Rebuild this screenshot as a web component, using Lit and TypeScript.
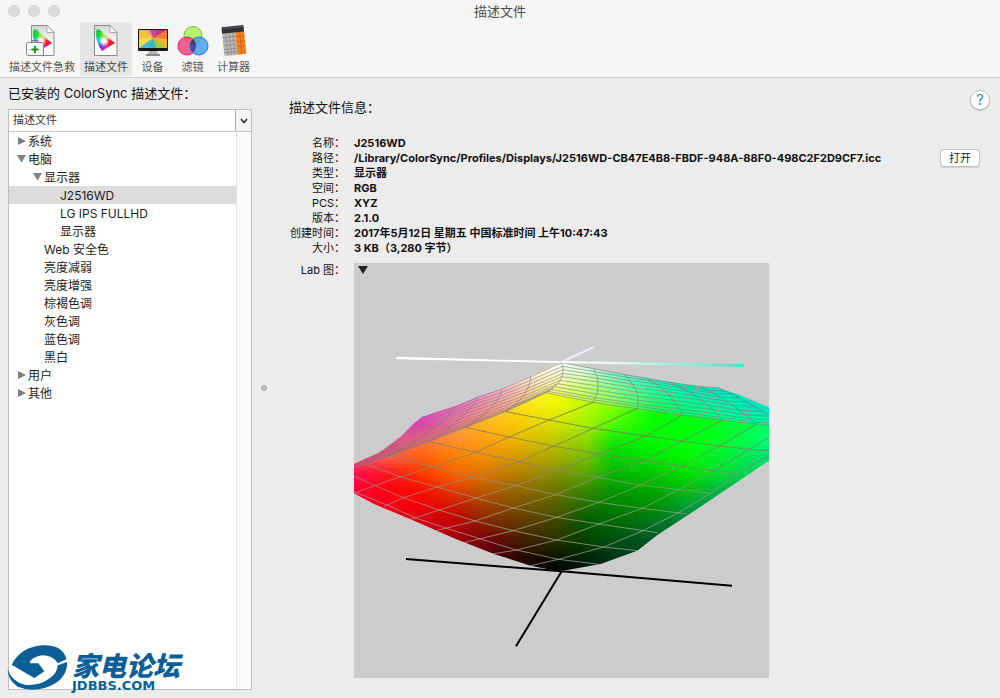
import { LitElement, html, svg, css } from "lit";
import { customElement, property, state } from "lit/decorators.js";
import { classMap } from "lit/directives/class-map.js";

type Point = [number, number];
type Row = [number, string[]];

/* ---------- Lab gamut plot ---------- */

const COLS = [0, 100, 200, 300, 400, 500, 600, 700, 780, 900, 1000, 1100, 1245];

const BODY: Row[] = [
  [150, "ff8060 ff8060 ff8050 ffa850 ffc850 ffe838 f4fc10 c0ff00 80ff00 00ff20 00ff40 00ff50 00ff80".split(" ")],
  [200, "ff8060 ff8060 ff8050 ffa850 ffc048 ffe020 f0f400 b8fc00 80ff00 10ff10 00ff20 00ff40 00ff80".split(" ")],
  [250, "ff7060 ff7060 ff8050 ffa040 ffb81c f5cc00 d8e000 a0f000 50fc00 00ff00 00ff08 00ff20 00ff60".split(" ")],
  [300, "ff6060 ff6858 ff7840 ff9030 ffa010 e8b800 c0c800 8cd800 10ec00 00fa00 00ff08 00ff20 00ff78".split(" ")],
  [350, "ff5068 ff6050 ff6010 ff8000 f09000 d09c00 a8ac00 74c000 00d400 00e600 00f800 00f030 00e070".split(" ")],
  [400, "ff1050 ff1820 ff3800 f86400 d87800 b08000 889000 58a800 00b800 00c800 00e000 00e030 00d070".split(" ")],
  [450, "ff0038 ff0010 fc0c00 e03c00 b85c00 906800 707400 388800 009800 00a800 00bc10 00b448 00a860".split(" ")],
  [500, "f00030 f80018 f00008 cc1400 984000 785000 585c00 187000 008000 008c00 009c38 009850 009050".split(" ")],
  [550, "d00020 d80018 d40014 c00008 802400 5c3800 404400 005800 006600 007420 007838 007840 007840".split(" ")],
  [600, "a00018 a00018 a00018 a00010 740008 442000 283000 004400 005010 005428 005830 005830 005830".split(" ")],
  [650, "680014 680014 680014 680014 580010 280800 0c1400 002408 003818 004020 004020 004020 004020".split(" ")],
  [700, "280004 280004 280004 280004 200004 100000 000000 001004 001808 002010 002010 002010 002010".split(" ")],
];

const CREST: Row[] = [
  [66, "f0d8f0 f0d8f0 f0d8f0 f0d8f0 f8e0f0 fff0f0 ffffff d8fff8 80f4e8 20e8d8 00e0d0 00dcd0 00d8d0".split(" ")],
  [100, "e890d8 e890d8 e890d8 f0b0e0 f4c8e8 ffe8e4 fffad8 d0fcc8 78f4cc 30ecd0 10e4d0 00dcd0 00d8d0".split(" ")],
  [150, "e060d0 e060d0 e068d0 e880d8 f09cd8 ffc8b0 f8f880 c0ff68 88ff88 28fca0 00f0b8 00e4c8 00dccc".split(" ")],
  [200, "d838d0 d838d0 e040d0 e868c8 f8949c ffb880 f0f830 b8ff40 88ff50 20ff60 00fc80 00f4a4 00e0c4".split(" ")],
  [250, "d038c0 d838c0 e83cb8 f47494 ff9860 ffb040 e0f010 a0ff10 50ff20 00ff40 00ff58 00ff80 00f8a0".split(" ")],
  [300, "d04098 e04898 f46078 ff7860 ff9840 ffb040 e0f010 a0ff10 50ff20 00ff40 00ff58 00ff80 00f8a0".split(" ")],
  [350, "d84484 ec5070 ff6450 ff7850 ff9840 ffb040 e0f010 a0ff10 50ff20 00ff40 00ff58 00ff80 00f8a0".split(" ")],
  [400, "ff2060 ff4850 ff6450 ff7850 ff9840 ffb040 e0f010 a0ff10 50ff20 00ff40 00ff58 00ff80 00f8a0".split(" ")],
];

const BODY_OUTLINE =
  "M0 383 L100 350 L225 305 L335 262 L455 213 L575 158 L718 187 L850 206 L985 225 L1105 240 L1245 256 V362 L1010 520 L910 585 L850 632 L740 672 L640 690 L605 692 L530 677 L420 642 L300 595 L170 538 L60 492 L0 460Z";
const CREST_OUTLINE =
  "M623 66 L530 108 L443 146 L370 171 L300 199 L205 230 L180 250 L140 290 L80 335 L0 372 V395 L575 175 L1245 262 V202 L1150 162 L1090 143 L1040 140 L955 127 L805 102 L715 86Z";

/* Each arc: start on the silhouette, control point, end on the ridge. */
const LEFT_ARCS: [Point, Point, Point][] = [
  [[623, 68], [642, 122], [575, 158]],
  [[530, 110], [530, 165], [455, 215]],
  [[443, 148], [438, 195], [335, 262]],
  [[370, 172], [350, 225], [225, 305]],
  [[300, 203], [262, 265], [100, 350]],
  [[205, 232], [120, 315], [0, 383]],
];
const RIGHT_ARCS: [Point, Point, Point][] = [
  [[623, 68], [642, 122], [575, 158]],
  [[718, 86], [748, 132], [718, 187]],
  [[808, 103], [865, 150], [850, 206]],
  [[878, 115], [955, 155], [985, 225]],
  [[948, 127], [1050, 170], [1105, 240]],
  [[1040, 140], [1140, 190], [1208, 252]],
  [[1095, 144], [1190, 186], [1300, 262]],
];
const RING_STEPS = [0, 0.1, 0.2, 0.31, 0.42, 0.54, 0.66, 0.77, 0.87, 0.94, 1];

const MESH: Point[][] = [
  [[455, 215], [585, 240], [718, 265], [875, 288], [985, 303], [1095, 318], [1245, 333]],
  [[335, 262], [465, 291], [600, 318], [735, 342], [870, 362], [985, 378], [1150, 402]],
  [[225, 305], [365, 337], [495, 365], [612, 390], [730, 412], [860, 435], [1070, 460]],
  [[100, 345], [238, 381], [352, 412], [485, 437], [605, 464], [735, 487], [865, 505], [1000, 522]],
  [[20, 368], [138, 410], [250, 441], [366, 474], [478, 504], [608, 532], [735, 552], [910, 578]],
  [[0, 408], [63, 437], [148, 473], [256, 510], [363, 543], [478, 572], [608, 600], [750, 621], [850, 632]],
  [[0, 455], [103, 497], [188, 535], [278, 565], [383, 598], [488, 630], [613, 658], [735, 673]],
  [[718, 187], [585, 240], [465, 291], [365, 337], [238, 381], [138, 410], [63, 437], [0, 460]],
  [[850, 205], [718, 265], [600, 318], [495, 365], [352, 412], [250, 441], [148, 473], [90, 500]],
  [[985, 225], [875, 288], [735, 342], [612, 390], [485, 437], [366, 474], [256, 510], [170, 538]],
  [[1105, 240], [985, 303], [870, 362], [730, 412], [605, 464], [478, 504], [363, 543], [245, 572]],
  [[1208, 252], [1095, 318], [985, 378], [860, 435], [735, 487], [608, 532], [478, 572], [330, 608]],
  [[1245, 292], [1090, 385], [995, 438], [865, 505], [735, 552], [608, 600], [488, 630], [415, 642]],
  [[1245, 345], [1150, 402], [1070, 460], [970, 520], [865, 573], [750, 621], [613, 658], [530, 677]],
];

const channels = (hex: string) => [0, 2, 4].map((i) => parseInt(hex.slice(i, i + 2), 16));

function rowAt(table: Row[], y: number): string[] {
  let i = 0;
  while (i < table.length - 2 && table[i + 1][0] < y) i++;
  const [y0, a] = table[i];
  const [y1, b] = table[i + 1];
  const t = Math.min(1, Math.max(0, (y - y0) / (y1 - y0)));
  return a.map((hex, k) => {
    const from = channels(hex);
    const to = channels(b[k]);
    return `rgb(${from.map((v, c) => Math.round(v + (to[c] - v) * t)).join(",")})`;
  });
}

function bands(name: string, table: Row[], top: number, bottom: number) {
  const out = [];
  for (let y = top; y < bottom; y += 6) {
    const id = `${name}-${y}`;
    out.push(svg`
      <linearGradient id=${id} gradientUnits="userSpaceOnUse" x1="0" y1="0" x2="1245" y2="0">
        ${rowAt(table, y + 3).map((c, i) => svg`<stop offset=${COLS[i] / 1245} stop-color=${c}></stop>`)}
      </linearGradient>
      <rect x="0" y=${y} width="1245" height="6" fill="url(#${id})" shape-rendering="crispEdges"></rect>`);
  }
  return out;
}

const onArc = ([a, c, b]: [Point, Point, Point], t: number): Point => [
  (1 - t) ** 2 * a[0] + 2 * t * (1 - t) * c[0] + t * t * b[0],
  (1 - t) ** 2 * a[1] + 2 * t * (1 - t) * c[1] + t * t * b[1],
];
const line = (pts: Point[]) => "M" + pts.map((p) => p.map(Math.round).join(" ")).join("L");
const arcPath = ([a, c, b]: [Point, Point, Point]) => `M${a}Q${c} ${b}`;

const ringLines = [LEFT_ARCS, RIGHT_ARCS]
  .map((arcs) => RING_STEPS.map((t) => line(arcs.map((arc) => onArc(arc, t)))).join(""))
  .join("");
const arcLines = [...LEFT_ARCS.slice(0, 5), ...RIGHT_ARCS.slice(1)].map(arcPath).join("");

@customElement("lab-plot")
export class LabPlot extends LitElement {
  static styles = css`
    :host {
      display: block;
      position: relative;
      width: 100%;
      max-width: 415px;
      aspect-ratio: 1;
      background: #ccc;
    }
    .plot {
      display: block;
      width: 100%;
      height: 100%;
    }
    .mode {
      position: absolute;
      top: 3px;
      left: 4px;
      display: grid;
      padding: 0;
      border: 0;
      background: none;
    }
  `;

  render() {
    return html`
      <svg class="plot" viewBox="0 0 1245 1245" role="img" aria-label="Lab 图">
        <defs>
          <clipPath id="body"><path d=${BODY_OUTLINE}></path></clipPath>
          <clipPath id="crest"><path d=${CREST_OUTLINE}></path></clipPath>
          <clipPath id="frame"><rect x="0" y="-231" width="1245" height="1245"></rect></clipPath>
          <linearGradient id="axis" gradientUnits="userSpaceOnUse" x1="623" y1="0" x2="1170" y2="0">
            <stop offset="0" stop-color="#fff"></stop>
            <stop offset="0.35" stop-color="#d8f8f0"></stop>
            <stop offset="1" stop-color="#58dccb"></stop>
          </linearGradient>
          <linearGradient id="wire" gradientUnits="userSpaceOnUse" x1="0" y1="180" x2="0" y2="560">
            <stop offset="0" stop-color="#60704c" stop-opacity="0.9"></stop>
            <stop offset="0.5" stop-color="#85806c" stop-opacity="0.85"></stop>
            <stop offset="0.8" stop-color="#b0a898" stop-opacity="0.7"></stop>
            <stop offset="1" stop-color="#b4b4a8" stop-opacity="0.75"></stop>
          </linearGradient>
        </defs>
        <g transform="translate(0 231)" clip-path="url(#frame)">
          <path d="M127 50 L623 64 V69 L127 58Z" fill="#fff"></path>
          <path d="M623 66 L719 21" stroke="#ececff" stroke-width="6"></path>
          <g clip-path="url(#crest)">${bands("c", CREST, 60, 402)}</g>
          <g clip-path="url(#body)">${bands("b", BODY, 156, 696)}</g>
          <g fill="none" stroke="#7c7a78" stroke-width="2.4">
            <path d=${ringLines} stroke-opacity="0.75"></path>
            <path d=${arcLines} stroke-opacity="0.8"></path>
          </g>
          <g fill="none" stroke-width="2.6">
            ${MESH.map((pts) => svg`<path d=${line(pts)} stroke="url(#wire)"></path>`)}
          </g>
          <path d="M623 63 L1170 72 V81 L623 69Z" fill="url(#axis)"></path>
          <path d="M156 657 L623 694 L1134 737 M623 694 L486 919" fill="none" stroke="#000" stroke-width="6"></path>
        </g>
      </svg>
      <button class="mode" aria-label="显示方式">
        <svg width="10" height="8" viewBox="0 0 10 8"><path d="M0 0H10L5 8Z" fill="#222"></path></svg>
      </button>
    `;
  }
}

/* ---------- Toolbar icons ---------- */

const profilePage = (id: string, x: number) => svg`
  <defs>
    <linearGradient id="${id}-page" x1="0" y1="0" x2="0" y2="1">
      <stop offset="0" stop-color="#d4d4d4"></stop><stop offset="0.6" stop-color="#fafafa"></stop>
    </linearGradient>
    <clipPath id="${id}-clip"><path d="M2 6Q3 3 6 5L21 18L8 26Q1 16 2 6Z"></path></clipPath>
    <filter id="${id}-mix" x="-20%" y="-20%" width="140%" height="140%"><feGaussianBlur stdDeviation="1"></feGaussianBlur></filter>
  </defs>
  <g transform="translate(${x} 1)">
    <path d="M.5 .5H16L23 7.500V30.500H.5Z" fill="url(#${id}-page)" stroke="#8c8c8c"></path>
    <g clip-path="url(#${id}-clip)"><g filter="url(#${id}-mix)">
      <rect width="24" height="30" fill="#fff"></rect>
      <path d="M0 0H9L9 13L0 14Z" fill="#10d840"></path>
      <path d="M9 6L14 10L11 15L8 11Z" fill="#b8e830"></path>
      <path d="M0 13L7 13L7 20L1 20Z" fill="#18c8e8"></path>
      <path d="M1 20L8 18L11 28L4 28Z" fill="#5a30e0"></path>
      <path d="M9 20L14 18L16 26L9 28Z" fill="#d820c0"></path>
      <path d="M13 12L23 16V24H13Z" fill="#f01830"></path>
    </g></g>
    <path d="M16 .5V7.500H23Z" fill="#fff" stroke="#999" stroke-width=".8"></path>
  </g>`;

const icons: Record<string, () => unknown> = {
  aid: () => svg`${profilePage("aid", 6)}
    <path d="M7 18V16.500H13V18" fill="none" stroke="#777"></path>
    <rect x="1.500" y="18.500" width="17" height="13" rx="1.500" fill="#fafafa" stroke="#888"></rect>
    <path d="M2 25.500H8M13 25.500H18" stroke="#d8d8d8"></path>
    <path d="M10 22V29M6.500 25.500H13.500" stroke="#2e8f1c" stroke-width="2"></path>`,
  profile: () => profilePage("profile", 5),
  device: () => svg`
    <defs><clipPath id="screen"><rect x="3" y="6" width="28" height="18"></rect></clipPath></defs>
    <path d="M13 27H21L22 30H12Z" fill="#b4b4b4"></path><rect x="10" y="30" width="14" height="2" fill="#8a8a8a"></rect>
    <rect x="2" y="5" width="30" height="22" rx="1" fill="#161616"></rect>
    <g clip-path="url(#screen)">
      <rect x="3" y="6" width="28" height="18" fill="#f0c040"></rect>
      <path d="M17 14L3 2H14Z" fill="#e8a080"></path><path d="M17 14L12 2H22Z" fill="#e0409c"></path>
      <path d="M17 14L22 2H32V6Z" fill="#c03484"></path><path d="M17 14L32 5V16Z" fill="#f07c34"></path>
      <path d="M17 14L32 15V26Z" fill="#f4b424"></path><path d="M17 14L32 25V28H21Z" fill="#9ccc3c"></path>
      <path d="M17 14L22 28H10Z" fill="#38b8b4"></path><path d="M17 14L11 28H2V24Z" fill="#48b8e8"></path>
      <path d="M17 14L2 25V13Z" fill="#f0dc48"></path><path d="M17 14L2 14V2Z" fill="#f4c430"></path>
    </g>`,
  filter: () => svg`
    <circle cx="17" cy="11.500" r="9" fill="#b8f070" stroke="#74c030"></circle>
    <circle cx="11" cy="22" r="9" fill="#f04880" fill-opacity=".85" stroke="#c82860"></circle>
    <circle cx="23" cy="22" r="9" fill="#3c9cf0" fill-opacity=".8" stroke="#2878d0"></circle>
    <path d="M17 15.300A9 9 0 0 1 17 28.700A9 9 0 0 1 17 15.300Z" fill="#5844a8"></path>
    <path d="M17 15.300A9 9 0 0 1 19.800 20A9 9 0 0 1 14.200 20A9 9 0 0 1 17 15.300Z" fill="#484058"></path>`,
  calc: () => svg`
    <g transform="rotate(-6 17 17)">
      <path d="M6 4H19V31H6Z" fill="#b8b8b8"></path><path d="M19 4H28V31H19Z" fill="#f08020"></path>
      <path d="M6 2H28V8.500H6Z" fill="#303236"></path><path d="M7 3H27V4H7Z" fill="#5c6066"></path>
      <path d="M6 12.500H19M6 16.500H19M6 20.500H19M6 24.500H19M6 28H19M9.500 9V31M13 9V31M16.500 9V31" stroke="#8c8c8c" stroke-width=".8"></path>
      <path d="M19.500 13H28M19.500 18H28M19.500 23H28M23.500 9V31" stroke="#c86010" stroke-width=".8"></path>
    </g>`,
};

const TOOLS = [
  { icon: "aid", label: "描述文件急救" },
  { icon: "profile", label: "描述文件" },
  { icon: "device", label: "设备" },
  { icon: "filter", label: "滤镜" },
  { icon: "calc", label: "计算器" },
];

@customElement("tool-bar")
export class ToolBar extends LitElement {
  static styles = css`
    :host {
      display: block;
      padding: 0 5px 1px;
    }
    .tools {
      display: flex;
      gap: 1px;
    }
    .tool {
      display: flex;
      flex-direction: column;
      align-items: center;
      gap: 3px;
      min-width: 39px;
      height: 54px;
      padding: 2px 4px;
      border: 0;
      border-radius: 3px 3px 0 0;
      background: none;
      color: #555;
      font: inherit;
      font-size: 11px;
      line-height: 14px;
      white-space: nowrap;
    }
    .current {
      background: #e5e5e5;
      color: #444;
    }
    .glyph {
      display: block;
      flex: none;
      margin: 0 -4px;
    }
  `;

  @state() private current = "profile";

  render() {
    return html`<nav class="tools">
      ${TOOLS.map(
        (t) => html`<button
          class=${classMap({ tool: true, current: t.icon === this.current })}
          @click=${() => (this.current = t.icon)}
        >
          <svg class="glyph" width="34" height="33" viewBox="0 0 34 33" aria-hidden="true">${icons[t.icon]()}</svg>
          ${t.label}
        </button>`
      )}
    </nav>`;
  }
}

/* ---------- Profile list ---------- */

interface Node {
  name: string;
  level: number;
  open?: boolean;
}

const NODES: Node[] = [
  { name: "系统", level: 0, open: false },
  { name: "电脑", level: 0, open: true },
  { name: "显示器", level: 1, open: true },
  { name: "J2516WD", level: 2 },
  { name: "LG IPS FULLHD", level: 2 },
  { name: "显示器", level: 2 },
  { name: "Web 安全色", level: 1 },
  { name: "亮度减弱", level: 1 },
  { name: "亮度增强", level: 1 },
  { name: "棕褐色调", level: 1 },
  { name: "灰色调", level: 1 },
  { name: "蓝色调", level: 1 },
  { name: "黑白", level: 1 },
  { name: "用户", level: 0, open: false },
  { name: "其他", level: 0, open: false },
];

@customElement("profile-list")
export class ProfileList extends LitElement {
  static styles = css`
    :host {
      display: flex;
      flex-direction: column;
      box-sizing: border-box;
      border: 1px solid #bdbdbd;
      background: #fff;
    }
    .head {
      display: flex;
      height: 21px;
      border-bottom: 1px solid #c8c8c8;
    }
    .column {
      flex: 1;
      padding: 0 4px;
      color: #333;
      font-size: 11px;
      line-height: 21px;
    }
    .menu {
      display: grid;
      place-items: center;
      width: 16px;
      padding: 0;
      border: 0;
      border-left: 1px solid #a8a8a8;
      background: #f4f4f4;
    }
    .content {
      display: flex;
      flex: 1;
    }
    .rows {
      flex: 1;
      margin: 0;
      padding: 0;
      list-style: none;
    }
    .track {
      box-sizing: border-box;
      width: 15px;
      border-left: 1px solid #e4e4e4;
      background: #fafafa;
    }
    .row {
      display: flex;
      align-items: center;
      width: 100%;
      height: 18px;
      padding: 2px 0 0 7px;
      border: 0;
      background: none;
      color: #1c1c1c;
      font: inherit;
      font-size: 12px;
      line-height: 16px;
      text-align: left;
    }
    .level-1 {
      padding-left: 23px;
    }
    .level-2 {
      padding-left: 39px;
    }
    .selected {
      background: #dcdcdc;
    }
    .arrow {
      flex: none;
      width: 12px;
      height: 10px;
      margin-bottom: 2px;
      fill: #808080;
    }
  `;

  @state() private selected = 3;

  private arrow(open?: boolean) {
    const d = open === undefined ? "" : open ? "M1 1H10L5.5 8.500Z" : "M2 1V9L10 5Z";
    return html`<svg class="arrow" viewBox="0 0 12 10" aria-hidden="true"><path d=${d}></path></svg>`;
  }

  render() {
    return html`
      <div class="head">
        <span class="column">描述文件</span>
        <button class="menu" aria-label="分组方式">
          <svg width="8" height="6" viewBox="0 0 8 6" fill="none" stroke="#333" stroke-width="1.600">
            <path d="M1 1L4 4.500L7 1"></path>
          </svg>
        </button>
      </div>
      <div class="content">
        <ul class="rows">
          ${NODES.map(
            (n, i) => html`<li>
              <button
                class=${classMap({ row: true, [`level-${n.level}`]: true, selected: i === this.selected })}
                @click=${() => (this.selected = i)}
              >
                ${this.arrow(n.open)}${n.name}
              </button>
            </li>`
          )}
        </ul>
        <div class="track"></div>
      </div>
    `;
  }
}

/* ---------- Forum mark ---------- */

@customElement("forum-mark")
export class ForumMark extends LitElement {
  static styles = css`
    :host {
      display: flex;
      align-items: flex-end;
      gap: 3px;
      color: #0b5f96;
    }
    .swirl {
      flex: none;
    }
    .words {
      display: flex;
      flex-direction: column;
    }
    .name {
      font: italic 900 27px/30px "Noto Sans CJK SC", sans-serif;
      white-space: nowrap;
    }
    .site {
      font: bold 13px/12px "DejaVu Sans", sans-serif;
    }
  `;

  render() {
    return html`
      <svg class="swirl" width="62" height="48" viewBox="0 0 186 144" fill="currentColor" aria-hidden="true">
        <path d="M14 62Q42 8 108 4Q168 2 178 46L152 58Q138 34 106 34Q82 38 70 50Q66 56 72 58H94L112 82L82 102Z"></path>
        <path d="M152 64L180 54Q182 100 134 124Q82 148 32 128Q2 108 2 76Q14 114 54 122Q94 126 124 106Q152 88 152 64Z"></path>
      </svg>
      <div class="words">
        <span class="name">家电论坛</span>
        <span class="site">JDBBS.COM</span>
      </div>
    `;
  }
}

/* ---------- Details ---------- */

@customElement("profile-info")
export class ProfileInfo extends LitElement {
  static styles = css`
    :host {
      display: block;
      padding: 12px 10px 20px 13px;
    }
    .top {
      display: flex;
      justify-content: space-between;
      align-items: flex-start;
    }
    .title {
      margin: 0;
      padding-top: 8px;
      font-size: 13px;
      font-weight: 400;
      line-height: 18px;
    }
    .help {
      width: 20px;
      height: 20px;
      padding: 0;
      border: 1px solid #c6c6c6;
      border-radius: 50%;
      background: #fff;
      box-shadow: 0 1px 1px #0003;
      color: #2f7fb8;
      font: inherit;
      font-size: 14px;
      line-height: 18px;
    }
    .details {
      display: grid;
      grid-template-columns: 1fr auto;
      padding: 20px 10px 7px 0;
    }
    .facts {
      display: grid;
      grid-template-columns: 56px 1fr;
      grid-auto-rows: 15px;
      column-gap: 9px;
      margin: 0;
      line-height: 15px;
    }
    .key {
      text-align: right;
      white-space: nowrap;
    }
    .value {
      margin: 0;
      font-weight: 700;
      white-space: nowrap;
    }
    .open {
      height: 18px;
      margin-top: 13px;
      padding: 0 8px;
      border: 1px solid #c4c4c4;
      border-radius: 4px;
      background: #fff;
      box-shadow: 0 1px 1px #0002;
      color: #222;
      font: inherit;
      line-height: 16px;
    }
    .figure {
      display: grid;
      grid-template-columns: 56px 1fr;
      column-gap: 9px;
      margin: 0;
      line-height: 15px;
    }
  `;

  @property({ attribute: false }) facts: [string, string][] = [];

  render() {
    return html`
      <div class="top">
        <h2 class="title">描述文件信息：</h2>
        <button class="help" aria-label="帮助">?</button>
      </div>
      <div class="details">
        <dl class="facts">
          ${this.facts.map(([k, v]) => html`<dt class="key">${k}：</dt><dd class="value">${v}</dd>`)}
        </dl>
        <button class="open">打开</button>
      </div>
      <figure class="figure">
        <figcaption class="key">Lab 图：</figcaption>
        <lab-plot></lab-plot>
      </figure>
    `;
  }
}

/* ---------- Window ---------- */

@customElement("app-root")
export class AppRoot extends LitElement {
  static styles = css`
    :host {
      display: flex;
      flex-direction: column;
      min-height: 100vh;
      background: #ececec;
      color: #111;
      font-family: Inter, "Noto Sans CJK SC", sans-serif;
      font-size: 11px;
    }
    .chrome {
      border-bottom: 1px solid #d0d0d0;
      background: #f6f6f6;
    }
    .titlebar {
      display: grid;
      grid-template-columns: 1fr auto 1fr;
      align-items: center;
      height: 22px;
      padding: 0 8px;
    }
    .lights {
      display: flex;
      gap: 8px;
    }
    .light {
      box-sizing: border-box;
      width: 12px;
      height: 12px;
      padding: 0;
      border: 1px solid #d0d0d0;
      border-radius: 50%;
      background: #dcdcdc;
    }
    .caption {
      margin: 0;
      color: #4a4a4a;
      font-size: 13px;
      font-weight: 400;
      line-height: 20px;
    }
    .panes {
      display: grid;
      flex: 1;
      grid-template-columns: 252px 24px 1fr;
    }
    .side {
      position: relative;
      display: flex;
      flex-direction: column;
      padding: 6px 0 8px 8px;
    }
    .heading {
      margin: 0 0 7px;
      font-size: 13px;
      font-weight: 400;
      line-height: 18px;
    }
    .list {
      flex: 1;
    }
    .mark {
      position: absolute;
      bottom: 6px;
      left: 7px;
    }
    .splitter {
      display: grid;
      place-items: center;
    }
    .grip {
      box-sizing: border-box;
      width: 6px;
      height: 6px;
      border: 1px solid #a8a8a8;
      border-radius: 50%;
      background: #c0c0c0;
    }
  `;

  private facts: [string, string][] = [
    ["名称", "J2516WD"],
    ["路径", "/Library/ColorSync/Profiles/Displays/J2516WD-CB47E4B8-FBDF-948A-88F0-498C2F2D9CF7.icc"],
    ["类型", "显示器"],
    ["空间", "RGB"],
    ["PCS", "XYZ"],
    ["版本", "2.1.0"],
    ["创建时间", "2017年5月12日 星期五 中国标准时间 上午10:47:43"],
    ["大小", "3 KB（3,280 字节）"],
  ];

  render() {
    return html`
      <header class="chrome">
        <div class="titlebar">
          <div class="lights">
            <button class="light" aria-label="关闭"></button>
            <button class="light" aria-label="最小化"></button>
            <button class="light" aria-label="缩放"></button>
          </div>
          <h1 class="caption">描述文件</h1>
        </div>
        <tool-bar></tool-bar>
      </header>
      <main class="panes">
        <section class="side">
          <h2 class="heading">已安装的 ColorSync 描述文件：</h2>
          <profile-list class="list"></profile-list>
          <forum-mark class="mark"></forum-mark>
        </section>
        <div class="splitter"><span class="grip"></span></div>
        <profile-info .facts=${this.facts}></profile-info>
      </main>
    `;
  }
}
